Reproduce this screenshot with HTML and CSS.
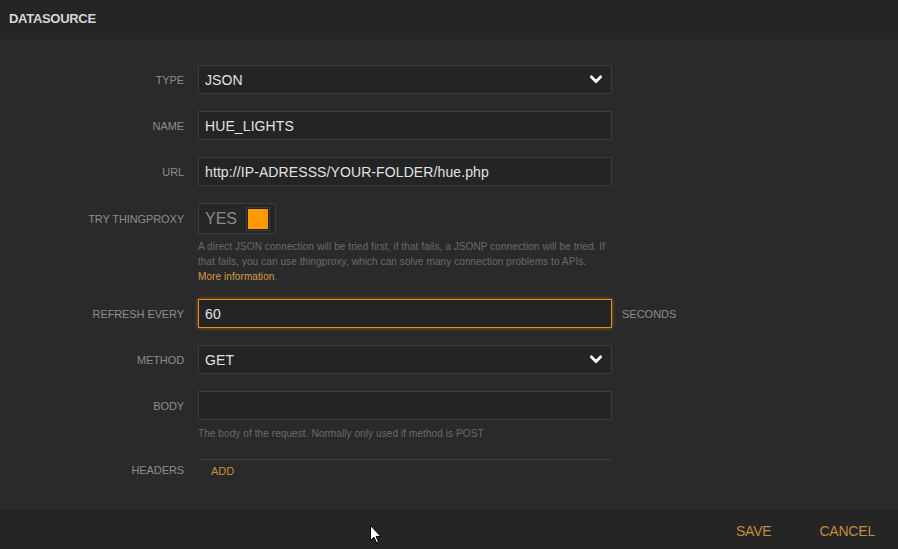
FILE: index.html
```html
<!DOCTYPE html>
<html>
<head>
<meta charset="utf-8">
<link rel="stylesheet" href="styles.css">
</head>
<body>
<div class="dialog">
  <header class="title">DATASOURCE</header>
  <main class="form">
    <div class="row">
      <label class="lbl">TYPE</label>
      <div class="field select">JSON
        <svg class="chev" width="12" height="9" viewBox="0 0 12 9"><path d="M1.5 2 L6 6.5 L10.5 2" fill="none" stroke="#fff" stroke-width="2.8" stroke-linecap="square"/></svg>
      </div>
    </div>
    <div class="row">
      <label class="lbl">NAME</label>
      <div class="field">HUE_LIGHTS</div>
    </div>
    <div class="row">
      <label class="lbl">URL</label>
      <div class="field">http://IP-ADRESSS/YOUR-FOLDER/hue.php</div>
    </div>
    <div class="row row-tight">
      <label class="lbl">TRY THINGPROXY</label>
      <div class="toggle"><span class="yes">YES</span><span class="knob"></span></div>
    </div>
    <div class="row row-help">
      <span></span>
      <p class="help">A direct JSON connection will be tried first, if that fails, a JSONP connection will be tried. If that fails, you can use thingproxy, which can solve many connection problems to APIs. <span class="link">More information</span>.</p>
    </div>
    <div class="row">
      <label class="lbl">REFRESH EVERY</label>
      <div class="field focus">60</div>
      <span class="unit">SECONDS</span>
    </div>
    <div class="row">
      <label class="lbl">METHOD</label>
      <div class="field select">GET
        <svg class="chev" width="12" height="9" viewBox="0 0 12 9"><path d="M1.5 2 L6 6.5 L10.5 2" fill="none" stroke="#fff" stroke-width="2.8" stroke-linecap="square"/></svg>
      </div>
    </div>
    <div class="row row-tight">
      <label class="lbl">BODY</label>
      <div class="field"></div>
    </div>
    <div class="row row-help2">
      <span></span>
      <p class="help help2">The body of the request. Normally only used if method is POST</p>
    </div>
    <div class="row row-headers">
      <label class="lbl">HEADERS</label>
      <div class="headers"><span class="add">ADD</span></div>
    </div>
  </main>
  <footer class="footer">
    <span class="btn">SAVE</span>
    <span class="btn">CANCEL</span>
  </footer>
  <svg class="cursor" width="12" height="19" viewBox="0 0 12 19"><path d="M0.5 0.5 L0.5 15.5 L4 12.2 L6.6 18 L8.6 17.1 L6.1 11.5 L10.8 11.5 Z" fill="#fff" stroke="#000" stroke-width="1"/></svg>
</div>
</body>
</html>
```
FILE: styles.css
```css
* { box-sizing: border-box; }
html, body { margin: 0; padding: 0; }
body {
  width: 898px;
  height: 549px;
  background: #2a2a2a;
  font-family: "Liberation Sans", Arial, sans-serif;
  overflow: hidden;
}
.dialog {
  position: relative;
  height: 549px;
  display: flex;
  flex-direction: column;
}
.title {
  height: 39px;
  background: #252525;
  color: #d6d6d6;
  font-weight: bold;
  font-size: 13px;
  letter-spacing: -0.3px;
  padding: 11px 0 0 9px;
}
.form {
  flex: 1;
  padding-top: 26px;
}
.row {
  display: grid;
  grid-template-columns: 184px 414px auto;
  column-gap: 14px;
  align-items: center;
  margin-bottom: 17px;
}
.row-tight { margin-bottom: 0; }
.row-help { margin-bottom: 15px; }
.row-help2 { margin-bottom: 19px; }
.lbl {
  text-align: right;
  color: #8d8d8d;
  font-size: 11px;
  letter-spacing: -0.1px;
}
.field {
  height: 29px;
  border: 1px solid #3c3c3c;
  background: #242424;
  color: #e2e2e2;
  font-size: 14px;
  letter-spacing: 0.1px;
  padding: 0 0 0 6px;
  display: flex;
  align-items: center;
  position: relative;
}
.field.select { justify-content: space-between; padding-right: 9px; }
.field.focus {
  border-color: #e8901c;
  box-shadow: 0 0 4px rgba(232, 144, 28, 0.55);
}
.chev { display: block; }
.unit {
  color: #8d8d8d;
  font-size: 11px;
  margin-left: -4px;
}
.toggle {
  width: 78px;
  height: 31px;
  border: 1px solid #3c3c3c;
  background: #262626;
  display: flex;
  align-items: center;
  padding-left: 6px;
  gap: 10px;
}
.yes {
  color: #8a8a8a;
  font-size: 16px;
}
.knob {
  width: 22px;
  height: 22px;
  background: #ff9900;
  border: 1px solid #222;
  outline: 1px solid #3c3c3c;
}
.help {
  margin: 5px 0 0;
  color: #6b6b6b;
  font-size: 10px;
  line-height: 15px;
  letter-spacing: 0.09px;
}
.help2 { margin-top: 6px; }
.link { color: #d59a4a; white-space: nowrap; }
.headers {
  border-top: 1px solid #3c3c3c;
  height: 22px;
  padding: 1px 0 0 13px;
  margin-top: -1px;
}
.row-headers .lbl { padding-top: 4px; }
.row-headers { align-items: start; }
.add {
  color: #cf8a3b;
  font-size: 11px;
}
.footer {
  height: 39px;
  background: #252525;
  display: flex;
  justify-content: flex-end;
  align-items: center;
  gap: 48px;
  padding: 2px 23px 0 0;
}
.btn {
  color: #c68a3f;
  font-size: 14px;
  letter-spacing: -0.2px;
}
.cursor {
  position: absolute;
  left: 370px;
  top: 525px;
}
```
